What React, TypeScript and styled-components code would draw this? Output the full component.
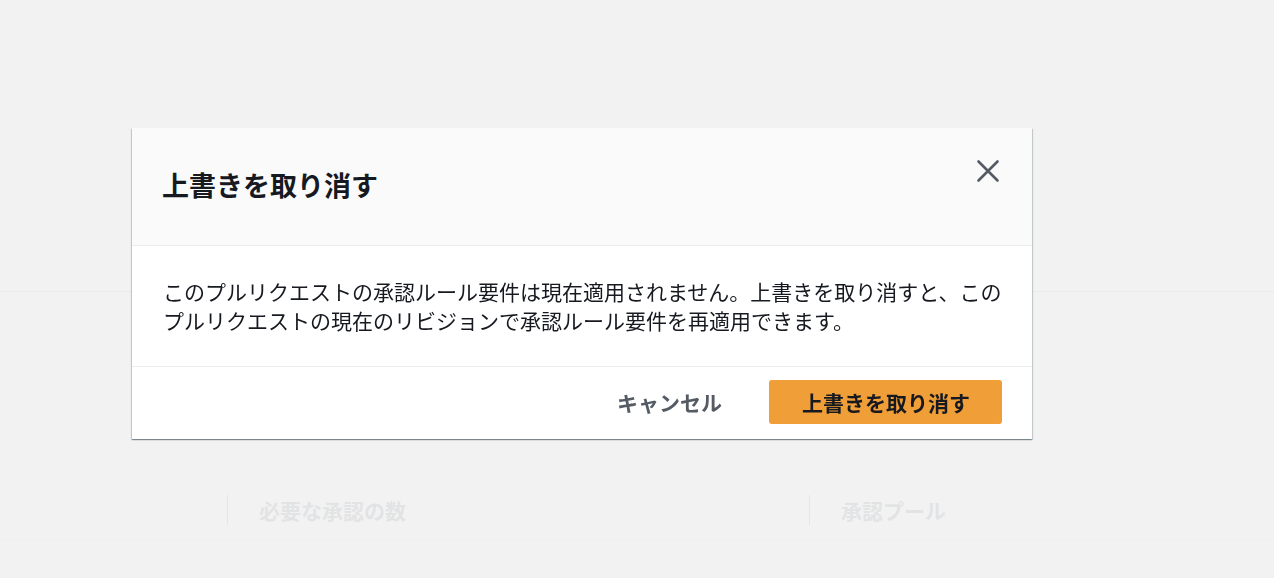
import styled, { createGlobalStyle } from 'styled-components'

const GlobalStyle = createGlobalStyle`
  html, body {
    margin: 0;
    padding: 0;
    background: #f2f2f2;
    font-family: "Noto Sans CJK JP", "Noto Sans", sans-serif;
  }
  * {
    box-sizing: border-box;
  }
`

const App = () => {
  return (
    <>
      <GlobalStyle />
      <Page>
        <TopArea />
        <TableHead>
          <HeadCell />
          <HeadCell $divider>必要な承認の数</HeadCell>
          <HeadCell $divider>承認プール</HeadCell>
        </TableHead>
      </Page>

      <Overlay>
        <Dialog role="dialog" aria-modal="true">
          <Header>
            <Title>上書きを取り消す</Title>
            <CloseButton aria-label="閉じる">
              <svg width="30" height="30" viewBox="0 0 30 30" fill="none">
                <path
                  d="M5.5 5.5 L24.5 24.5 M24.5 5.5 L5.5 24.5"
                  stroke="#545b64"
                  strokeWidth="2.6"
                  strokeLinecap="round"
                />
              </svg>
            </CloseButton>
          </Header>
          <Body>
            このプルリクエストの承認ルール要件は現在適用されません。上書きを取り消すと、この
            <br />
            プルリクエストの現在のリビジョンで承認ルール要件を再適用できます。
          </Body>
          <Footer>
            <LinkButton>キャンセル</LinkButton>
            <PrimaryButton>上書きを取り消す</PrimaryButton>
          </Footer>
        </Dialog>
      </Overlay>
    </>
  )
}

const Page = styled.div`
  min-height: 578px;
  display: flex;
  flex-direction: column;
`
const TopArea = styled.div`
  height: 292px;
  border-bottom: 1px solid #a4a4a4;
`
const TableHead = styled.div`
  display: grid;
  grid-template-columns: 227px 582px 1fr;
  padding: 203px 0 14px;
  border-bottom: 1px solid #d8d8d8;
`
const HeadCell = styled.div<{ $divider?: boolean }>`
  height: 30px;
  display: flex;
  align-items: center;
  padding-left: 31px;
  font-size: 21px;
  font-weight: 700;
  color: #545b64;
  border-left: ${(p) => (p.$divider ? '1px solid #6e6e6e' : 'none')};
`

const Overlay = styled.div`
  position: fixed;
  inset: 0;
  background: rgba(242, 242, 242, 0.9);
  display: flex;
  align-items: flex-start;
  padding: 128px 0 0 132px;
`
const Dialog = styled.div`
  width: 900px;
  background: #ffffff;
  box-shadow: 0 1px 1px 0 rgba(0, 28, 36, 0.3), 1px 1px 1px 0 rgba(0, 28, 36, 0.15),
    -1px 1px 1px 0 rgba(0, 28, 36, 0.15);
`
const Header = styled.div`
  height: 118px;
  background: #fafafa;
  border-bottom: 1px solid #eaeded;
  display: flex;
  align-items: center;
  justify-content: space-between;
  padding: 0 29px 0 30px;
`
const Title = styled.h2`
  margin: 0 0 4px 0;
  font-size: 27px;
  font-weight: 700;
  color: #16191f;
  line-height: 36px;
`
const CloseButton = styled.button`
  align-self: flex-start;
  margin-top: 28px;
  width: 30px;
  height: 30px;
  padding: 0;
  border: none;
  background: none;
  cursor: pointer;
  display: flex;
`
const Body = styled.div`
  padding: 31px 30px 31px 31px;
  font-size: 21px;
  line-height: 29px;
  color: #16191f;
  border-bottom: 1px solid #eaeded;
  white-space: nowrap;
`
const Footer = styled.div`
  display: flex;
  justify-content: flex-end;
  align-items: center;
  gap: 16px;
  padding: 13px 30px 15px;
`
const LinkButton = styled.button`
  height: 44px;
  padding: 0 31px;
  border: none;
  background: none;
  font-family: inherit;
  font-size: 21px;
  font-weight: 700;
  color: #545b64;
  cursor: pointer;
`
const PrimaryButton = styled(LinkButton)`
  background: #f09e38;
  border-radius: 3px;
  color: #16191f;
  padding: 0 32px 0 33px;
`

export default App
